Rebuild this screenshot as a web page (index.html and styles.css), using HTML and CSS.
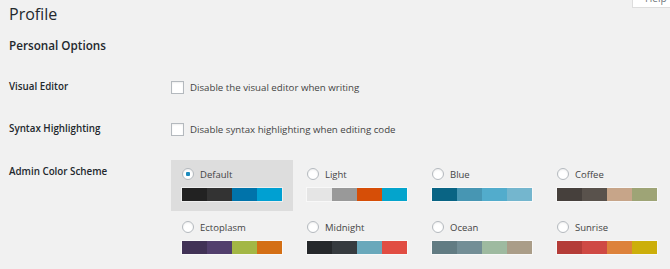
FILE: index.html
```html
<!DOCTYPE html>
<html>
<head>
  <meta charset="utf-8">
  <title>Profile</title>
  <link rel="stylesheet" href="styles.css">
</head>
<body>
  <div class="help-tab"><span>Help</span></div>

  <div class="wrap">
    <h1 class="title">Profile</h1>
    <h2 class="section-title">Personal Options</h2>

    <div class="form-table">
      <div class="row">
        <div class="th">Visual Editor</div>
        <label class="td check-label">
          <input type="checkbox" class="checkbox">
          Disable the visual editor when writing
        </label>
      </div>

      <div class="row">
        <div class="th">Syntax Highlighting</div>
        <label class="td check-label">
          <input type="checkbox" class="checkbox">
          Disable syntax highlighting when editing code
        </label>
      </div>

      <div class="row row-top">
        <div class="th th-top">Admin Color Scheme</div>
        <div class="td">
          <div class="color-picker">
            <label class="color-option selected">
              <span class="option-head"><input type="radio" name="scheme" class="radio" checked> Default</span>
              <span class="palette">
                <span style="background:#222"></span><span style="background:#333"></span><span style="background:#0073aa"></span><span style="background:#00a0d2"></span>
              </span>
            </label>
            <label class="color-option">
              <span class="option-head"><input type="radio" name="scheme" class="radio"> Light</span>
              <span class="palette">
                <span style="background:#e5e5e5"></span><span style="background:#999"></span><span style="background:#d64e07"></span><span style="background:#04a4cc"></span>
              </span>
            </label>
            <label class="color-option">
              <span class="option-head"><input type="radio" name="scheme" class="radio"> Blue</span>
              <span class="palette">
                <span style="background:#096484"></span><span style="background:#4796b3"></span><span style="background:#52accc"></span><span style="background:#74b6ce"></span>
              </span>
            </label>
            <label class="color-option">
              <span class="option-head"><input type="radio" name="scheme" class="radio"> Coffee</span>
              <span class="palette">
                <span style="background:#46403c"></span><span style="background:#59524c"></span><span style="background:#c7a589"></span><span style="background:#9ea476"></span>
              </span>
            </label>
            <label class="color-option">
              <span class="option-head"><input type="radio" name="scheme" class="radio"> Ectoplasm</span>
              <span class="palette">
                <span style="background:#413256"></span><span style="background:#523f6d"></span><span style="background:#a3b745"></span><span style="background:#d46f15"></span>
              </span>
            </label>
            <label class="color-option">
              <span class="option-head"><input type="radio" name="scheme" class="radio"> Midnight</span>
              <span class="palette">
                <span style="background:#25282b"></span><span style="background:#363b3f"></span><span style="background:#69a8bb"></span><span style="background:#e14d43"></span>
              </span>
            </label>
            <label class="color-option">
              <span class="option-head"><input type="radio" name="scheme" class="radio"> Ocean</span>
              <span class="palette">
                <span style="background:#627c83"></span><span style="background:#738e96"></span><span style="background:#9ebaa0"></span><span style="background:#aa9d88"></span>
              </span>
            </label>
            <label class="color-option">
              <span class="option-head"><input type="radio" name="scheme" class="radio"> Sunrise</span>
              <span class="palette">
                <span style="background:#b43c38"></span><span style="background:#cf4944"></span><span style="background:#dd823b"></span><span style="background:#ccaf0b"></span>
              </span>
            </label>
          </div>
        </div>
      </div>
    </div>
  </div>
</body>
</html>
```

FILE: styles.css
```css
* {
  box-sizing: border-box;
}

body {
  margin: 0;
  background: #f1f1f1;
  color: #444;
  font-family: 'Open Sans', 'Noto Sans', sans-serif;
  font-size: 9.7px;
}

.help-tab {
  position: absolute;
  top: 0;
  right: 0;
  width: 38px;
  height: 8px;
  background: #fff;
  border-left: 1px solid #ddd;
  border-bottom: 1px solid #ddd;
  overflow: hidden;
  color: #72777c;
  font-size: 10px;
}

.help-tab span {
  display: block;
  margin: -9px 0 0 12px;
}

.wrap {
  padding-left: 9px;
}

.title {
  margin: 0;
  padding-top: 3px;
  font-size: 16px;
  font-weight: 400;
  line-height: 22px;
  color: #23282d;
}

.section-title {
  margin: 0;
  padding-top: 13px;
  font-size: 11.7px;
  font-weight: 600;
  line-height: 15px;
  color: #23282d;
}

.form-table {
  display: flex;
  flex-direction: column;
  gap: 2px;
  margin-top: 14px;
}

.row {
  display: flex;
  align-items: center;
  height: 40px;
}

.row-top {
  align-items: flex-start;
  height: auto;
  padding-top: 9px;
}

.th {
  width: 162px;
  flex-shrink: 0;
  font-size: 9.8px;
  font-weight: 600;
  line-height: 14px;
  color: #23282d;
}

.th-top {
  padding-top: 5px;
}

.check-label {
  display: flex;
  align-items: center;
  gap: 6px;
}

.checkbox {
  appearance: none;
  margin: 0;
  width: 13px;
  height: 13px;
  background: #fff;
  border: 1px solid #b4b9be;
  box-shadow: inset 0 1px 2px rgba(0, 0, 0, 0.07);
}

.color-picker {
  display: grid;
  grid-template-columns: repeat(4, 122px);
  column-gap: 3px;
  row-gap: 2px;
}

.color-option {
  display: flex;
  flex-direction: column;
  gap: 7px;
  height: 51px;
  padding: 8px 10px 0;
}

.color-option.selected {
  background: #ddd;
}

.option-head {
  display: flex;
  align-items: center;
  gap: 6px;
  height: 12px;
  padding-left: 1px;
  font-size: 9.5px;
}

.radio {
  appearance: none;
  margin: 0;
  width: 12px;
  height: 12px;
  border-radius: 50%;
  background: #fff;
  border: 1px solid #b4b9be;
  box-shadow: inset 0 1px 2px rgba(0, 0, 0, 0.07);
}

.radio:checked {
  background: radial-gradient(circle, #1e8cbe 0 2px, #fff 2.5px);
}

.palette {
  display: flex;
  width: 102px;
  height: 15px;
  border: 1px solid rgba(255, 255, 255, 0.5);
}

.palette span {
  flex: 1;
}
```
